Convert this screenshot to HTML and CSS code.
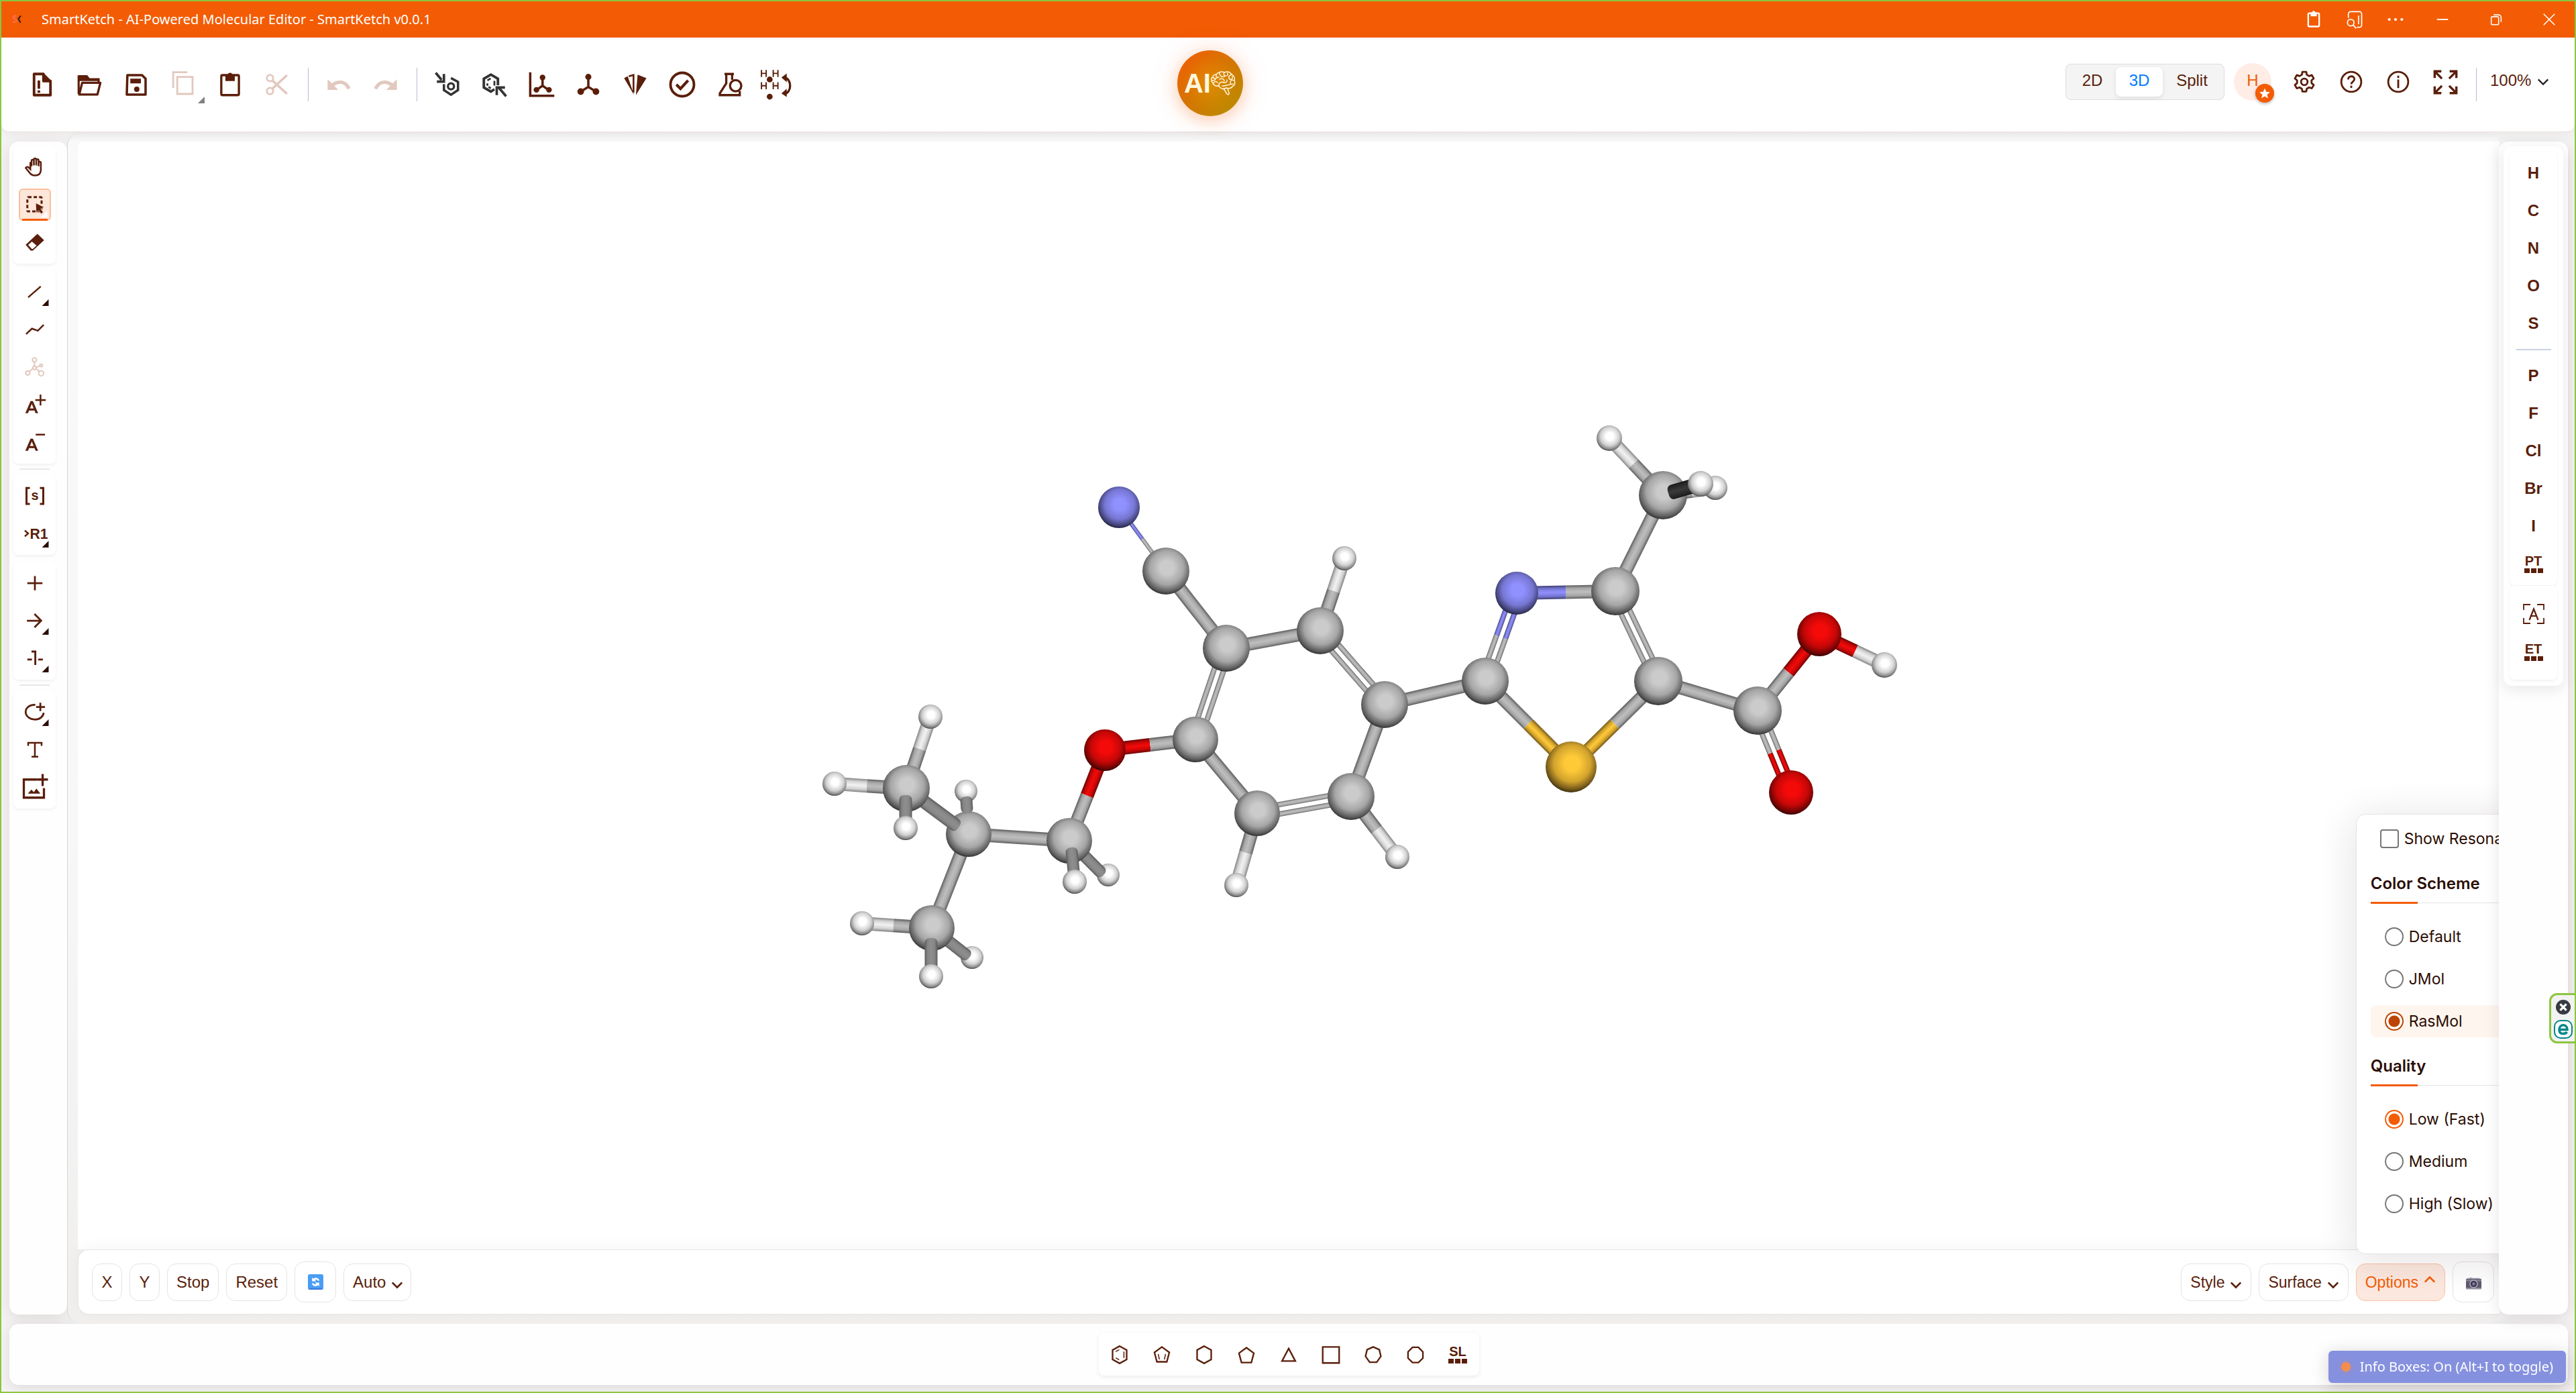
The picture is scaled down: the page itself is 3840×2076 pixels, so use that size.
FILE: index.html
```html
<!DOCTYPE html>
<html lang="en">
<head>
<meta charset="utf-8">
<title>SmartKetch - AI-Powered Molecular Editor</title>
<link rel="stylesheet" href="styles.css">
</head>
<body>
<div class="titlebar">
  <svg class="app-logo" viewBox="0 0 16 14"><path d="M7 2.500C5 .5 1.500 1.500 2 4s5 2 5 4.500S3.500 12 1 10.500" fill="none" stroke="#ff6b4a" stroke-width="2.500"/><path d="M14 1l-4 5 3.500 6" fill="none" stroke="#33221c" stroke-width="2.200"/></svg>
  <span class="titlebar-text">SmartKetch - AI-Powered Molecular Editor - SmartKetch v0.0.1</span>
  <div class="window-tools">
    <button class="win-btn narrow" aria-label="Clipboard"><svg viewBox="0 0 24 24"><rect x="5" y="4" width="14" height="17" rx="1.500" fill="none" stroke="currentColor" stroke-width="2"/><path d="M8 3h2a2 2 0 014 0h2v5H8z" fill="currentColor"/></svg></button>
    <button class="win-btn narrow" aria-label="Search page"><svg viewBox="0 0 24 24" fill="none" stroke="currentColor" stroke-width="1.500"><path d="M4 10V5a3 3 0 013-3h11a3 3 0 013 3v14a3 3 0 01-3 3h-3M17 7v11"/><circle cx="7" cy="16" r="4.200"/><path d="M10 19l4 4.500"/></svg></button>
    <button class="win-btn narrow" aria-label="More"><svg viewBox="0 0 24 24" fill="currentColor"><circle cx="4" cy="12" r="1.800"/><circle cx="12" cy="12" r="1.800"/><circle cx="20" cy="12" r="1.800"/></svg></button>
    <button class="win-btn" aria-label="Minimize"><svg viewBox="0 0 24 24" stroke="currentColor" stroke-width="2"><path d="M3 12h18"/></svg></button>
    <button class="win-btn" aria-label="Restore"><svg viewBox="0 0 24 24" fill="none" stroke="currentColor" stroke-width="1.700"><rect x="4" y="7.500" width="12" height="13" rx="2"/><path d="M8 4.500h8a4 4 0 014 4V16"/></svg></button>
    <button class="win-btn" aria-label="Close"><svg viewBox="0 0 24 24" stroke="currentColor" stroke-width="1.700"><path d="M3 3l18 18M21 3L3 21"/></svg></button>
  </div>
</div>

<header class="header">
  <div class="tools">
    <button class="tool" aria-label="New"><svg viewBox="0 0 24 24"><path d="M5 3h8v6h6v12H5z" fill="none" stroke="currentColor" stroke-width="2.200" stroke-linejoin="round"/><path d="M13 2l7 7h-7zM8 8.500h2.200v7H8zM8 17h2.200v2H8z" fill="currentColor"/></svg></button>
    <button class="tool" aria-label="Open"><svg viewBox="0 0 24 24"><path d="M3 20V5h7l2 2.500h8V10" fill="none" stroke="currentColor" stroke-width="1.800"/><path d="M3 4h7l2 3h8v2H3z" fill="currentColor"/><path d="M6 10.500h15.500L19 20.500H3.500z" fill="none" stroke="currentColor" stroke-width="1.900" stroke-linejoin="round"/></svg></button>
    <button class="tool" aria-label="Save"><svg viewBox="0 0 24 24"><path d="M4.500 4H17l3 3v13.500h-16z" fill="none" stroke="currentColor" stroke-width="2" stroke-linejoin="round"/><path d="M7 7h9v4H7z" fill="currentColor"/><circle cx="12.500" cy="16" r="2.300" fill="currentColor"/></svg></button>
    <button class="tool faded" aria-label="Copy" disabled><svg viewBox="0 0 24 24"><path d="M7 5.500h13V20H7z" fill="none" stroke="currentColor" stroke-width="1.600"/><path d="M3.500 15V1.500h12" fill="none" stroke="currentColor" stroke-width="1.600"/></svg><i class="corner"></i></button>
    <button class="tool" aria-label="Paste"><svg viewBox="0 0 24 24"><rect x="4.500" y="4" width="15" height="17" rx="1" fill="none" stroke="currentColor" stroke-width="1.900"/><path d="M8 4h2a2 2 0 014 0h2v5H8z" fill="currentColor"/></svg></button>
    <button class="tool faded" aria-label="Cut" disabled><svg viewBox="0 0 24 24" fill="none" stroke="currentColor"><circle cx="6" cy="6.500" r="2.700" stroke-width="1.600"/><circle cx="6" cy="17.500" r="2.700" stroke-width="1.600"/><path d="M8 8.500L20.500 20M8 15.500L20.500 4" stroke-width="2"/></svg></button>
    <span class="divider"></span>
    <button class="tool faded" aria-label="Undo" disabled><svg viewBox="0 0 24 24"><path d="M2.500 7.500v9h9L8.200 13.200c4.500-3.200 9-2 11 3l2.800-1C19.500 8.500 12 6.500 6.200 11z" fill="currentColor"/></svg></button>
    <button class="tool faded" aria-label="Redo" disabled><svg viewBox="0 0 24 24"><path d="M21.500 7.500v9h-9l3.300-3.300c-4.500-3.200-9-2-11 3l-2.800-1C4.500 8.500 12 6.500 17.800 11z" fill="currentColor"/></svg></button>
    <span class="divider"></span>
    <button class="tool slate" aria-label="Aromatize"><svg viewBox="0 0 24 24"><path d="M15 6.500l6 3.200v7l-6 4-6-4v-5" fill="none" stroke="currentColor" stroke-width="2"/><circle cx="15" cy="13.500" r="2.600" fill="none" stroke="currentColor" stroke-width="1.900"/><path d="M2 2l5 6M3 9.500h6V3" fill="none" stroke="currentColor" stroke-width="2.100"/></svg></button>
    <button class="tool slate" aria-label="Dearomatize"><svg viewBox="0 0 24 24"><path d="M15 12.500V7L9 3.500 3 7v7.500L9 18l3-2" fill="none" stroke="currentColor" stroke-width="2.200"/><path d="M6 8.500l2.800-1.700M6 13v-2M12 8.800v4M7 14l2 1.200" stroke="currentColor" stroke-width="1.600"/><path d="M22 22l-6-7M14 21v-6.500h7" fill="none" stroke="currentColor" stroke-width="2.100"/></svg></button>
    <button class="tool" aria-label="Layout"><svg viewBox="0 0 24 24"><path d="M2.500 1.500v20H23" fill="none" stroke="currentColor" stroke-width="2"/><path d="M13 6v7l-5 3.500M13 13l5 3.500" fill="none" stroke="currentColor" stroke-width="2"/><g fill="currentColor"><circle cx="13" cy="6" r="2.400"/><circle cx="7.800" cy="16.500" r="2.400"/><circle cx="18.500" cy="16.500" r="2.400"/></g></svg></button>
    <button class="tool" aria-label="Clean up"><svg viewBox="0 0 24 24"><path d="M12 6v8l-6.500 4M12 14l6.500 4" fill="none" stroke="currentColor" stroke-width="2"/><g fill="currentColor"><circle cx="12" cy="5.500" r="2.600"/><circle cx="5.500" cy="18" r="2.800"/><circle cx="18.500" cy="18" r="2.800"/></g></svg></button>
    <button class="tool" aria-label="Stereo"><svg viewBox="0 0 24 24"><path d="M14 3.500l7.500 3L12.500 21zM2.500 6.500l3-1.700L11 21z" fill="currentColor"/><path d="M6.500 5l4-1.200v15" fill="none" stroke="currentColor" stroke-width="1.500"/></svg></button>
    <button class="tool" aria-label="Check"><svg viewBox="0 0 24 24" fill="none" stroke="currentColor" stroke-width="2.200"><circle cx="12" cy="12" r="10"/><path d="M7 12l3.500 3.500L17 8.500" stroke-width="2.400"/></svg></button>
    <button class="tool" aria-label="Calculated values"><svg viewBox="0 0 24 24" fill="none" stroke="currentColor" stroke-width="1.900"><path d="M8 3h8M9.500 3v8L4 19.500V21h17v-3.500M14.500 3v5"/><circle cx="17.500" cy="13" r="4.800"/></svg></button>
    <button class="tool" aria-label="Explicit hydrogens"><svg viewBox="0 0 24 24"><path d="M-.5-.5v6M3.500-.5v6M-.5 2.500h4M9.500-.5v6M13.500-.5v6M9.500 2.500h4M-.5 10v6M3.500 10v6M-.5 13h4M9.500 10v6M13.500 10v6M9.500 13h4" stroke="currentColor" stroke-width="1.100"/><circle cx="6.500" cy="7.700" r="2.500" fill="currentColor"/><circle cx="6.500" cy="22.300" r="2.500" fill="currentColor"/><path d="M19 6c6.500 1 6.500 13 0 14" fill="none" stroke="currentColor" stroke-width="1.900"/><path d="M16.500 6L21 2.500v7.500zM16.500 19.500l4.500-4v7z" fill="currentColor"/></svg></button>
  </div>

  <button class="ai-button" aria-label="AI assistant"><span>AI</span><svg viewBox="0 0 38 36" fill="none" stroke="currentColor" stroke-width="1.500" stroke-linecap="round"><path d="M8 5c3-4 9-5 12-3 5-2 9 0 11 3 4 2 5 6 4 9 2 4 0 8-3 9-2 3-6 3-9 2-5 3-9 1-11-3-4 1-8-1-9-4-3-3-3-8 0-9 0-3 3-4 5-4z"/><path d="M8 5c-1 4 2 5 4 4M13 3c0 5 5 7 9 4M20 2c-2 3 0 5 2 5M25 3c1 2 0 3-1 4M31 5c-3 1-6 4-3 7 3 1 5-1 4-4M3 9c2 3 6 2 7 0M2 14c3 0 5-1 5-3M4 18c1-3 4-3 6-1M13 12c4-2 7 0 7 3M12 22c-1-4 3-7 7-5 3 1 6-1 5-4M35 14c-3-2-6 0-6 3s3 3 4 2M17 22c3 1 5-1 7-1s4 0 5-2M19 26l5 8c2 2 4 0 3-2l-2-6"/></svg></button>

  <div class="header-right">
    <div class="segmented">
      <button>2D</button><button class="active">3D</button><button>Split</button>
    </div>
    <button class="avatar" aria-label="Account H">H<span class="badge"><svg viewBox="0 0 24 24"><path d="M12 3l2.700 6.300 6.800.6-5.200 4.500 1.600 6.700L12 17.500l-5.900 3.600 1.600-6.700-5.200-4.500 6.800-.6z" fill="#fff"/></svg></span></button>
    <button class="round-tool" aria-label="Settings"><svg viewBox="0 0 24 24" fill="none" stroke="currentColor" stroke-width="2" stroke-linejoin="round"><path d="M10 1.500h4l.6 3 2.400 1.400 2.900-1 2 3.500-2.300 2v2.900l2.300 2-2 3.500-2.900-1-2.400 1.400-.6 3h-4l-.6-3L7 17.800l-2.900 1-2-3.500 2.300-2v-2.900l-2.300-2 2-3.500 2.900 1 2.400-1.400z"/><circle cx="12" cy="12" r="3.400"/></svg></button>
    <button class="round-tool" aria-label="Help"><svg viewBox="0 0 24 24" fill="none" stroke="currentColor" stroke-width="2"><circle cx="12" cy="12" r="10.500"/><path d="M8.800 9.500c0-4.500 6.500-4.300 6.500-.3 0 2.500-3.300 2.600-3.300 5.300"/><path d="M12 16v2.400"/></svg></button>
    <button class="round-tool" aria-label="About"><svg viewBox="0 0 24 24" fill="none" stroke="currentColor" stroke-width="2"><circle cx="12" cy="12" r="10.500"/><path d="M12 9.500v9M12 5.500V8"/></svg></button>
    <button class="round-tool" aria-label="Full screen"><svg class="wide" viewBox="0 0 24 24" fill="none" stroke="currentColor" stroke-width="2.200"><path d="M1.500 8V1.500H8M16 1.500h6.500V8M22.500 16v6.500H16M8 22.500H1.500V16M2 2l6.500 6.500M22 2l-6.500 6.500M22 22l-6.500-6.500M2 22l6.500-6.500"/></svg></button>
    <span class="divider"></span>
    <label class="zoom"><select aria-label="Zoom"><option>100%</option></select><svg class="chevron" viewBox="0 0 20 12"><path d="M2 2l8 8 8-8"/></svg></label>
  </div>
</header>

<main class="workspace">
  <nav class="left-bar" aria-label="Drawing tools">
    <div class="group">
      <button class="item" aria-label="Hand"><svg viewBox="0 0 24 24"><path d="M8 11V4.500a1.400 1.400 0 012.800 0V10 3a1.400 1.400 0 012.800 0v7-6a1.400 1.400 0 012.800 0v7-4a1.300 1.300 0 012.700 0v8c0 5-3 7-7 7-3 0-5-1-7-4l-4-5c1-1.500 3-1.500 4 0l1.500 1.500V6" fill="none" stroke="currentColor" stroke-width="2"/></svg></button>
      <button class="item selected" aria-label="Select"><svg viewBox="0 0 24 24"><rect x="3" y="3" width="17" height="17" rx="1" fill="none" stroke="currentColor" stroke-width="2.400" stroke-dasharray="4 2.500"/><path d="M13 10l10 5-4 2 3 4-2.500 2-3-4-3 3z" fill="currentColor" stroke="#fde6da" stroke-width=".6"/></svg><i class="corner pale"></i></button>
      <button class="item" aria-label="Erase"><svg viewBox="0 0 24 24"><path d="M1 15L15 2l8 7.500L9.500 22H7z" fill="currentColor"/><path d="M4 15.200l4.500-4 5.500 4.800L9.500 20h-1.200z" fill="#fff"/></svg></button>
    </div>
    <div class="group">
      <button class="item" aria-label="Bond"><svg viewBox="0 0 24 24"><path d="M4 18.500l15-13" stroke="currentColor" stroke-width="2"/></svg><i class="corner"></i></button>
      <button class="item" aria-label="Chain"><svg viewBox="0 0 24 24"><path d="M1.500 17.500l7-6.500 7 2.500 7-7" fill="none" stroke="currentColor" stroke-width="2"/></svg></button>
      <button class="item faded" aria-label="Stereochemistry" disabled><svg viewBox="0 0 24 24" fill="none" stroke="currentColor" stroke-width="1.600"><circle cx="11.500" cy="3.500" r="2.500"/><circle cx="11.500" cy="13" r="2"/><circle cx="3.500" cy="19" r="2.500"/><circle cx="19.500" cy="19.500" r="3"/><circle cx="19.500" cy="10" r="1.500"/><path d="M11.500 6v5M9.500 14l-4 3M13.500 14l4 3.500M13.500 12.500l4.500-2"/></svg></button>
      <button class="item" aria-label="Charge plus"><svg viewBox="0 0 24 24"><path d="M1 22L7 8h2.500l6 14H13l-1.300-3.200H4.900L3.600 22zM5.700 16.800h5.200L8.300 10.500z" fill="currentColor" stroke="currentColor" stroke-width=".5"/><path d="M12.500 6.500H25M18.700 0v13" stroke="currentColor" stroke-width="2"/></svg></button>
      <button class="item" aria-label="Charge minus"><svg viewBox="0 0 24 24"><path d="M1 22L7 8h2.500l6 14H13l-1.300-3.200H4.900L3.600 22zM5.700 16.800h5.200L8.300 10.500z" fill="currentColor" stroke="currentColor" stroke-width=".5"/><path d="M13 3h11" stroke="currentColor" stroke-width="2"/></svg></button>
    </div>
    <hr>
    <div class="group">
      <button class="item" aria-label="S-Group"><svg viewBox="0 0 24 24"><path d="M6 2.500H2v19h4M18 2.500h4v19h-4" fill="none" stroke="currentColor" stroke-width="2.400"/><text x="12" y="17" text-anchor="middle" font-size="16" font-weight="700" fill="currentColor">s</text></svg></button>
      <button class="item" aria-label="R-Group"><svg viewBox="0 0 24 24"><path d="M0 8.500l4 3.500-4 3.500" fill="none" stroke="currentColor" stroke-width="2"/><text x="6" y="18" font-size="17" font-weight="700" fill="currentColor">R1</text></svg><i class="corner"></i></button>
    </div>
    <div class="group">
      <button class="item" aria-label="Reaction plus"><svg viewBox="0 0 24 24"><path d="M3 12h18M12 3.500v17" stroke="currentColor" stroke-width="2.200"/></svg></button>
      <button class="item" aria-label="Arrow"><svg viewBox="0 0 24 24"><path d="M2.500 12h17M11.500 4l8 8-8 8" fill="none" stroke="currentColor" stroke-width="2.200"/></svg><i class="corner"></i></button>
      <button class="item" aria-label="Reaction mapping"><svg viewBox="0 0 24 24"><path d="M3 13.500h5.500M16 13.500h5.500M8 4h4.500v16" fill="none" stroke="currentColor" stroke-width="2.300"/></svg><i class="corner"></i></button>
    </div>
    <hr>
    <div class="group">
      <button class="item" aria-label="Shape"><svg viewBox="0 0 24 24"><path d="M12.500 3.500C6 3 1 7 1 12s5 9 11 9S22 17.500 22.500 13" fill="none" stroke="currentColor" stroke-width="2.200"/><path d="M13.500 6H24M18.500 1v10" stroke="currentColor" stroke-width="2.200"/></svg><i class="corner"></i></button>
      <button class="item" aria-label="Text"><svg viewBox="0 0 24 24"><path d="M4 7.500V4h16v3.500M12 4v16.500M8 20.500h8" fill="none" stroke="currentColor" stroke-width="2"/></svg></button>
      <button class="item" aria-label="Image"><svg class="large" viewBox="0 0 24 24"><path d="M14.500 4.500H1V22.500h20V13" fill="none" stroke="currentColor" stroke-width="2.200"/><path d="M5 18.500l3.500-4 2.500 2.500 2.500-3.500 4 5z" fill="currentColor"/><path d="M14.500 4.500H25M19.700-1v12" stroke="currentColor" stroke-width="2.200"/></svg></button>
    </div>
  </nav>

  <section class="stage">
    <svg class="molecule" id="molecule" viewBox="116 211 3610 1651" role="img" aria-label="Molecule"></svg>
    <div class="stage-bar">
      <button class="pill">X</button>
      <button class="pill">Y</button>
      <button class="pill">Stop</button>
      <button class="pill">Reset</button>
      <button class="pill emoji" aria-label="Refresh"><svg viewBox="0 0 24 24"><rect width="24" height="24" rx="3" fill="#4a9df5"/><path d="M2 23h20" stroke="#3b76dc" stroke-width="2"/><path d="M6.500 11V5l2 2c4-3 8-1.500 9.500 3h-3c-1-2-2.500-2-4-1l2 2zM17.500 13v6l-2-2c-4 3-8 1.500-9.500-3h3c1 2 2.500 2 4 1l-2-2z" fill="#fff"/></svg></button>
      <label class="pill drop"><select aria-label="Rotation"><option>Auto</option></select><svg class="chevron low" viewBox="0 0 20 12"><path d="M2 2l8 8 8-8"/></svg></label>
      <span class="spacer"></span>
      <button class="pill menu">Style<svg class="chevron low" viewBox="0 0 20 12"><path d="M2 2l8 8 8-8"/></svg></button>
      <button class="pill menu">Surface<svg class="chevron low" viewBox="0 0 20 12"><path d="M2 2l8 8 8-8"/></svg></button>
      <div class="menu-anchor">
        <button class="pill menu open" aria-expanded="true">Options<svg class="chevron high" viewBox="0 0 20 12"><path d="M2 10l8-8 8 8"/></svg></button>
        <div class="options-menu">
          <label class="check"><input type="checkbox">Show Resonance</label>
          <h2>Color Scheme</h2>
          <div class="choices">
            <label class="choice"><input type="radio" name="scheme">Default</label>
            <label class="choice"><input type="radio" name="scheme">JMol</label>
            <label class="choice hover"><input type="radio" name="scheme" checked>RasMol</label>
          </div>
          <h2>Quality</h2>
          <div class="choices">
            <label class="choice"><input type="radio" name="quality" checked>Low (Fast)</label>
            <label class="choice"><input type="radio" name="quality">Medium</label>
            <label class="choice"><input type="radio" name="quality">High (Slow)</label>
          </div>
        </div>
      </div>
      <button class="pill emoji" aria-label="Snapshot"><svg class="camera" viewBox="0 0 24 24"><path d="M2 4h4V3h3v1h12v1H2z" fill="#9a94a6"/><rect y="5" width="24" height="16" rx="1" fill="#5f5a6c"/><path d="M0 6h24v3H0z" fill="#86809a"/><path d="M0 19h24v2H0z" fill="#9a94a6"/><circle cx="12" cy="13" r="6.500" fill="#b5b0c2"/><circle cx="12" cy="13" r="5" fill="#3b3650"/><circle cx="12" cy="13" r="2.500" fill="#7f78a0"/></svg></button>
    </div>
  </section>

  <aside class="right-bar" aria-label="Atoms">
    <div class="right-card">
      <div class="group">
        <button class="item">H</button><button class="item">C</button><button class="item">N</button><button class="item">O</button><button class="item">S</button>
        <hr>
        <button class="item">P</button><button class="item">F</button><button class="item">Cl</button><button class="item">Br</button><button class="item">I</button>
        <button class="item table"><span>PT</span><i class="dots"></i></button>
      </div>
      <div class="group tall">
        <button class="item" aria-label="Any atom"><svg viewBox="0 0 32 32" fill="none" stroke="currentColor"><path d="M11 2H1v8M21 2h10v8M31 22v8H21M11 30H1v-8" stroke-width="1.800"/><path d="M9.500 25L16 8.500 22.500 25M12 19h8" stroke-width="2.200"/></svg></button>
        <button class="item table"><span>ET</span><i class="dots"></i></button>
      </div>
    </div>
  </aside>
</main>

<footer class="bottom-bar">
  <div class="templates">
    <button aria-label="Benzene"><svg viewBox="0 0 24 24" fill="none" stroke="currentColor" stroke-width="2"><path d="M12 1l9 5v12l-9 5-9-5V6z"/><path d="M17.500 8v8M11.500 5.500L7 8M7 16l4.500 2.500" stroke-width="1.300"/></svg></button>
    <button aria-label="Cyclopentadiene"><svg viewBox="0 0 24 24" fill="none" stroke="currentColor" stroke-width="2"><path d="M12 2l9.500 7-3.200 12H5.700L2.500 9z"/><path d="M16.700 11l-1.500 7M7.300 11l1.500 7" stroke-width="1.300"/></svg></button>
    <button aria-label="Cyclohexane"><svg viewBox="0 0 24 24" fill="none" stroke="currentColor" stroke-width="2"><path d="M12 1l9 5v12l-9 5-9-5V6z"/></svg></button>
    <button aria-label="Cyclopentane"><svg viewBox="0 0 24 24" fill="none" stroke="currentColor" stroke-width="2"><path d="M12 3l9.500 7-3.200 12H5.700L2.500 10z"/></svg></button>
    <button aria-label="Cyclopropane"><svg viewBox="0 0 24 24" fill="none" stroke="currentColor" stroke-width="2"><path d="M12 4l8.500 16h-17z"/></svg></button>
    <button aria-label="Cyclobutane"><svg viewBox="0 0 24 24" fill="none" stroke="currentColor" stroke-width="2"><path d="M1.500 2h21v20.500h-21z"/></svg></button>
    <button aria-label="Cycloheptane"><svg viewBox="0 0 24 24" fill="none" stroke="currentColor" stroke-width="2"><path d="M12 2l7.800 3.500 2 8.500-5.300 7.500h-9L2.200 14l2-8.500z"/></svg></button>
    <button aria-label="Cyclooctane"><svg viewBox="0 0 24 24" fill="none" stroke="currentColor" stroke-width="2"><path d="M8.200 2.500h7.600l5.700 5.800v8l-5.700 5.700H8.200l-5.700-5.700v-8z"/></svg></button>
    <button class="table"><span>SL</span><i class="dots"></i></button>
  </div>
</footer>

<div class="toast"><i></i>Info Boxes: On (Alt+I to toggle)</div>
<div class="side-widget">
  <svg viewBox="0 0 24 24"><circle cx="12" cy="12" r="12" fill="#363b42"/><path d="M7 7l10 10M17 7L7 17" stroke="#fff" stroke-width="3.500"/></svg>
  <svg class="logo" viewBox="0 0 28 28"><rect x="1" y="1" width="26" height="26" rx="9" fill="#fff" stroke="#00868c" stroke-width="2"/><path d="M8 14.500h12c0-9-12-9-12 0s10 6 11.500 3.500" fill="none" stroke="#00868c" stroke-width="3.500"/></svg>
</div>
<script src="molecule.js"></script>
</body>
</html>
```
FILE: styles.css
```css
* { box-sizing: border-box; }

body {
  margin: 0;
  min-height: 100vh;
  display: flex;
  flex-direction: column;
  border: 2px solid #8cc63f;
  background: #f4f3f3;
  color: #5a1e0a;
  font: 24px/32px "Liberation Sans", Arial, sans-serif;
}

button, select {
  margin: 0;
  padding: 0;
  border: 0;
  background: none;
  color: inherit;
  font: inherit;
}

select { appearance: none; }
svg { display: block; overflow: visible; }

/* window title */
.titlebar {
  display: flex;
  align-items: center;
  height: 54px;
  padding-left: 16px;
  background: #f35c04;
  color: #fff;
  font: 20px/28px "Noto Sans", "Open Sans", sans-serif;
}
.app-logo { width: 15px; height: 14px; }
.titlebar-text { margin-left: 29px; }
.window-tools { display: flex; margin-left: auto; }
.win-btn { display: flex; align-items: center; justify-content: center; width: 80px; height: 54px; }
.win-btn.narrow { width: 61px; }
.win-btn:last-child { width: 77px; }
.win-btn svg { width: 22px; height: 22px; }
.win-btn.narrow svg { width: 28px; height: 28px; }

/* header */
.header {
  position: relative;
  z-index: 3;
  display: flex;
  align-items: center;
  justify-content: space-between;
  height: 141px;
  padding: 0 38px 0 26px;
  background: #fff;
  border-bottom: 1px solid #e8e0dc;
  border-radius: 0 0 12px 12px;
  box-shadow: 0 2px 16px rgba(60, 20, 10, .06);
}
.tools { display: flex; align-items: center; }
.tool { position: relative; display: flex; align-items: center; justify-content: center; width: 70px; height: 62px; }
.tool svg { width: 42px; height: 42px; }
.faded { color: #e2c8be; }
.slate { color: #333; }
.divider { width: 1px; height: 50px; margin: 0 10px 0 11px; background: #b8bdd2; }
.corner {
  position: absolute;
  right: 3px;
  bottom: 3px;
  width: 10px;
  height: 10px;
  background: #2b0d04;
  clip-path: polygon(100% 0, 100% 100%, 0 100%);
}
.tool .corner { background: #808080; }
.corner.pale { background: #fff; }

.ai-button {
  position: absolute;
  left: 47%;
  top: 19px;
  display: flex;
  align-items: center;
  justify-content: center;
  width: 98px;
  height: 98px;
  margin-left: -50px;
  border-radius: 50%;
  background: radial-gradient(circle at 50% 50%, rgba(255, 200, 0, .25), transparent 60%), linear-gradient(135deg, #f35c04, #b59000);
  box-shadow: 0 6px 24px rgba(243, 92, 4, .28), 0 0 48px rgba(243, 92, 4, .1);
  color: #fff7dd;
  font-weight: 700;
  font-size: 40px;
}
.ai-button svg { width: 38px; height: 36px; }

.header-right { display: flex; align-items: center; padding-bottom: 8px; }
.segmented { display: flex; height: 54px; padding: 4px; border: 1px solid #ddd; border-radius: 8px; background: #f4f4f4; }
.segmented button { width: 70px; padding-bottom: 4px; border-radius: 8px; }
.segmented button:last-child { width: 87px; }
.segmented .active { background: #fff; color: #007aff; box-shadow: 0 2px 6px rgba(0, 0, 0, .1); }
.avatar { position: relative; width: 56px; height: 56px; margin: 0 14px; padding-bottom: 4px; border-radius: 50%; background: #feece5; color: #f35c04; }
.badge { position: absolute; right: -4px; bottom: -3px; display: flex; align-items: center; justify-content: center; width: 28px; height: 28px; border-radius: 50%; background: #f35c04; box-shadow: 0 2px 4px rgba(0, 0, 0, .25); }
.badge svg { width: 20px; height: 20px; }
.round-tool { display: flex; align-items: center; justify-content: center; width: 70px; height: 56px; }
.round-tool svg { width: 34px; height: 34px; }
.round-tool .wide { width: 37px; height: 37px; }
.header-right .divider { margin: 8px 20px 0 11px; }
.zoom { display: flex; align-items: center; gap: 8px; }
.zoom select { padding-bottom: 4px; }
.chevron { width: 18px; height: 12px; fill: none; stroke: currentColor; stroke-width: 2.500; }
.zoom .chevron { color: #222; }

/* workspace */
.workspace { display: flex; flex: 1; padding: 0 10px 0 12px; }
.left-bar {
  width: 86px;
  margin: 14px 0;
  padding: 6px 17px 6px 6px;
  background: #fefefe;
  border-radius: 14px;
  box-shadow: 0 6px 22px rgba(60, 30, 30, .11);
}
.group { display: flex; flex-direction: column; align-items: center; gap: 8px; padding: 8px 0; background: #fff; border-radius: 8px; box-shadow: 0 2px 4px rgba(0, 0, 0, .06); }
.group + .group { margin-top: 10px; }
.left-bar hr { width: 45px; height: 2px; margin: 7px 9px; border: 0; background: #ebe6e6; }
.item { position: relative; display: flex; align-items: center; justify-content: center; width: 48px; height: 48px; font-weight: 700; }
.item svg { width: 30px; height: 30px; }
.item svg.large { width: 36px; height: 36px; }
.item.selected { background: #fde6da; border: 2px solid #fbc09c; border-radius: 6px; }
.item.selected::after { content: ""; position: absolute; left: 3px; right: 3px; bottom: -2px; height: 3px; background: #f35c04; }

.stage {
  position: relative;
  display: flex;
  flex: 1;
  flex-direction: column;
  padding: 14px 0 14px 15px;
  border-left: 1px solid #d9d5d4;
  border-radius: 20px;
  background: linear-gradient(#f0f0f0, #f9f9f9 14px, #f7f7f7 60%, #f0efee);
}
.molecule { flex: 1; width: 100%; min-height: 0; background: #fff; border-radius: 8px 0 0 0; }
.stage-bar { display: flex; align-items: center; gap: 11px; height: 97px; padding: 0 8px 0 20px; border: 1px solid #e8e6e5; border-right: 0; border-radius: 16px 0 0 16px; background: #fff; box-shadow: 0 -4px 20px rgba(60, 30, 30, .04); }
.pill { display: flex; align-items: center; justify-content: center; gap: 8px; min-width: 45px; height: 56px; padding: 0 13px; border: 1px solid #e6e4e3; border-radius: 14px; background: #fff; }
.pill.emoji { width: 62px; height: 61px; padding: 0; }
.pill.emoji svg { width: 23px; height: 23px; }
.pill .chevron { flex: none; width: 18px; }
.pill.drop { padding: 0 11px 0 13px; gap: 7px; }
.pill.menu { font-size: 23px; }
.chevron.low { margin-top: 8px; stroke-width: 3; }
.chevron.high { margin-bottom: 8px; stroke-width: 3; }
.pill.open { background: #fce8df; border-color: #f9c3a8; color: #f35c04; }
.pill .camera { margin-top: 4px; }
.spacer { flex: 1; }

.menu-anchor { position: relative; }
.options-menu {
  position: absolute;
  left: 0;
  bottom: calc(100% + 14px);
  width: 290px;
  padding: 12px 0 50px 21px;
  border: 1px solid #e6e4e3;
  border-radius: 14px;
  background: #fff;
  box-shadow: 0 8px 60px rgba(60, 30, 30, .14);
  color: #2b0d04;
  font-family: Inter, "Noto Sans", sans-serif;
  font-size: 23px;
}
.check, .choice { display: flex; align-items: center; gap: 8px; height: 48px; padding-left: 21px; border-radius: 8px; white-space: nowrap; }
.check { padding-left: 14px; }
.choices { display: flex; flex-direction: column; gap: 15px; }
.choice.hover { background: #fff5ef; }
.options-menu input { flex: none; width: 28px; height: 28px; margin: 0; accent-color: #f35c04; }
.options-menu input[type="radio"] { appearance: none; border: 2px solid #767676; border-radius: 50%; background: #fff; }
.options-menu input[type="radio"]:checked { border-color: #f35c04; background: radial-gradient(circle, #f35c04 0 8px, #fff 9px); }
.options-menu .hover input[type="radio"]:checked { border-color: #bd4503; background: radial-gradient(circle, #bd4503 0 8px, #fff 9px); }
.options-menu input[type="checkbox"] { appearance: none; border: 2px solid #767676; border-radius: 4px; background: #fff; }
.options-menu h2 { position: relative; margin: 27px 0 26px; padding-bottom: 12px; border-bottom: 1px solid #e6e4e3; font-size: 24px; font-weight: 600; line-height: 32px; }
.options-menu h2::after { content: ""; position: absolute; left: 0; bottom: -2px; width: 70px; height: 3px; background: #f35c04; }

.right-bar {
  position: relative;
  z-index: 2;
  width: 103px;
  margin: 14px 0 14px -1px;
  padding: 7px;
  background: #fefefe;
  border-radius: 14px;
  box-shadow: 0 6px 22px rgba(60, 30, 30, .12);
}
.right-card { padding: 8px 9px 9px; background: #fff; border-radius: 12px; box-shadow: 0 6px 20px rgba(60, 30, 30, .1); }
.right-bar .group + .group { margin-top: 1px; }
.right-bar hr { width: 52px; height: 2px; margin: 6px 0; border: 0; background: #c9d3e0; }
.group.tall { padding: 18px 0; }
.right-bar .item svg { width: 32px; height: 32px; }
.right-bar .item.table, .templates .table { flex-direction: column; gap: 2px; font-size: 20px; font-weight: 700; line-height: 18px; }
.dots { width: 28px; height: 7px; background: repeating-linear-gradient(90deg, currentColor 0 8px, transparent 8px 10px); }

/* templates */
.bottom-bar { display: flex; justify-content: center; margin: 0 10px 10px 12px; padding: 14px 0; border-radius: 14px; background: #fefefe; box-shadow: 0 4px 18px rgba(60, 30, 30, .12); }
.templates { display: flex; border-radius: 8px; background: #fff; box-shadow: 0 2px 6px rgba(0, 0, 0, .08); }
.templates button { display: flex; align-items: center; justify-content: center; width: 63px; height: 63px; }
.templates svg { width: 28px; height: 28px; }

.toast {
  position: fixed;
  z-index: 5;
  right: 15px;
  bottom: 15px;
  display: flex;
  align-items: center;
  gap: 14px;
  height: 48px;
  padding: 0 19px;
  border-radius: 6px;
  background: #8591df;
  box-shadow: 0 4px 24px rgba(60, 30, 30, .2);
  color: #fff;
  font: 20px/28px "Noto Sans", "Open Sans", sans-serif;
}
.toast i { width: 14px; height: 14px; border-radius: 50%; background: #f68d4f; box-shadow: 0 0 8px #b98a9a; }
.side-widget { position: fixed; z-index: 5; right: 0; top: 1480px; display: flex; flex-direction: column; align-items: center; gap: 8px; width: 40px; height: 75px; padding: 7px 2px 0; border: 3px solid #8cc63f; border-right-width: 2px; border-radius: 12px 0 0 12px; background: #f3f2f2; }
.side-widget svg { flex: none; width: 22px; height: 22px; }
.side-widget .logo { width: 28px; height: 28px; }
```
FILE: molecule.js
```js
// Ball-and-stick model: atoms are [element, x, y, radius].
const atoms = {
  n1: ['N', 1668, 756, 31], c1: ['C', 1738, 851, 35], c2: ['C', 1828, 966, 35],
  c3: ['C', 1968, 940, 35], h3: ['H', 2004, 832, 18], c4: ['C', 2064, 1050, 35],
  c5: ['C', 2014, 1187, 35], h5: ['H', 2083, 1277, 18], c6: ['C', 1874, 1212, 34],
  h6: ['H', 1843, 1319, 18], c7: ['C', 1782, 1102, 34], o1: ['O', 1647, 1118, 31],
  c8: ['C', 1594, 1253, 34], h8a: ['H', 1602, 1314, 18], h8b: ['H', 1652, 1304, 17],
  c9: ['C', 1444, 1243, 34], h9: ['H', 1440, 1179, 17],
  c10: ['C', 1351, 1175, 35], h10a: ['H', 1387, 1068, 18], h10b: ['H', 1244, 1168, 18], h10c: ['H', 1350, 1234, 18],
  c11: ['C', 1389, 1383, 34], h11a: ['H', 1285, 1376, 18], h11b: ['H', 1388, 1455, 18], h11c: ['H', 1449, 1427, 17],
  c12: ['C', 2214, 1015, 35], n2: ['N', 2261, 884, 32], c13: ['C', 2408, 881, 36],
  c14: ['C', 2479, 738, 36], h14a: ['H', 2399, 653, 19], h14b: ['H', 2557, 727, 18], h14c: ['H', 2535, 721, 19],
  c15: ['C', 2472, 1015, 36], s1: ['S', 2342, 1143, 38], c16: ['C', 2620, 1059, 36],
  o2: ['O', 2712, 945, 33], h2: ['H', 2809, 991, 19], o3: ['O', 2670, 1181, 33]
};
// [highlight, middle, rim, extreme edge]
const colors = {
  C: ['#cbcbcb', '#a6a6a6', '#5c5c5c', '#2c2c2c'], H: ['#ffffff', '#d2d2d2', '#848484', '#3c3c3c'],
  N: ['#9090ff', '#7676d2', '#414175', '#1f1f3a'], O: ['#f50a0a', '#c60707', '#6c0404', '#2e0101'],
  S: ['#ffca38', '#d2a32d', '#735819', '#35280b'], D: ['#8e8e8e', '#858585', '#5c5c5c', '#3c3c3c'],
  K: ['#3a3a3a', '#2a2a2a', '#181818', '#101010']
};
const ns = 'http://www.w3.org/2000/svg';
const svg = document.getElementById('molecule');

function add(parent, tag, attrs) {
  const el = document.createElementNS(ns, tag);
  for (const k in attrs) el.setAttribute(k, attrs[k]);
  parent.appendChild(el);
  return el;
}

const defs = add(svg, 'defs', {});
for (const key in colors) {
  const [light, mid, rim, edge] = colors[key];
  const ball = add(defs, 'radialGradient', { id: 'ball' + key, cx: .52, cy: .43, r: .58 });
  [[0, light], [.25, light], [.62, mid], [.88, rim], [1, edge]].forEach(([o, c]) => add(ball, 'stop', { offset: o, 'stop-color': c }));
  const rod = add(defs, 'linearGradient', { id: 'rod' + key, x1: 0, y1: 0, x2: 0, y2: 1 });
  const core = key === 'H' ? '#f2f2f2' : key === 'C' ? '#bebebe' : light;
  [[0, rim], [.22, mid], [.5, core], [.78, mid], [1, rim]].forEach(([o, c]) => add(rod, 'stop', { offset: o, 'stop-color': c }));
}

function rod(x1, y1, x2, y2, width, from, to, shift, split, round) {
  const length = Math.hypot(x2 - x1, y2 - y1);
  const angle = Math.atan2(y2 - y1, x2 - x1) * 180 / Math.PI;
  const g = add(svg, 'g', { transform: `translate(${x1} ${y1}) rotate(${angle})` });
  const y = shift - width / 2;
  if (from === to) {
    add(g, 'rect', { x: 0, y, width: length, height: width, rx: round ? 7 : 0, fill: `url(#rod${from})` });
    return;
  }
  add(g, 'rect', { x: length * split, y, width: length * (1 - split), height: width, fill: `url(#rod${to})` });
  add(g, 'rect', { x: 0, y, width: length * split, height: width, fill: `url(#rod${from})` });
}

function bond(a, b, order = 1, width = 20) {
  const [ea, x1, y1] = atoms[a], [eb, x2, y2] = atoms[b];
  const split = eb === 'H' ? .55 : .5;
  if (order === 1) rod(x1, y1, x2, y2, width, ea, eb, 0, split);
  else [-7, 7].forEach(s => rod(x1, y1, x2, y2, 8, ea, eb, s, split));
}

function ball(name) {
  const [e, cx, cy, r] = atoms[name];
  add(svg, 'circle', { cx, cy, r, fill: `url(#ball${e})` });
}

bond('n1', 'c1', 1, 6);
bond('c1', 'c2'); bond('c2', 'c3'); bond('c3', 'h3'); bond('c3', 'c4', 2);
bond('c4', 'c5'); bond('c5', 'h5'); bond('c5', 'c6', 2); bond('c6', 'h6');
bond('c6', 'c7'); bond('c7', 'c2', 2); bond('c7', 'o1'); bond('o1', 'c8');
bond('c8', 'c9'); bond('c9', 'c11'); bond('c10', 'h10a'); bond('c10', 'h10b'); bond('c11', 'h11a');
bond('c4', 'c12'); bond('c12', 'n2', 2); bond('n2', 'c13'); bond('c13', 'c14');
bond('c14', 'h14a'); bond('c14', 'h14b'); bond('c13', 'c15', 2); bond('c12', 's1'); bond('c15', 's1');
bond('c15', 'c16'); bond('c16', 'o2'); bond('o2', 'h2'); bond('c16', 'o3', 2);

['h9', 'h8b', 'h11c', 'c9', 'h14b'].forEach(ball);
rod(1440, 1187, 1442, 1212, 18, 'D', 'D', 0, .5, true);
rod(1645, 1304, 1594, 1253, 18, 'D', 'D', 0, .5, true);
rod(1445, 1427, 1389, 1383, 18, 'D', 'D', 0, .5, true);
rod(1429, 1233, 1351, 1175, 20, 'D', 'D', 0, .5, true);

['n1', 'c1', 'c2', 'c3', 'h3', 'c4', 'c5', 'h5', 'c6', 'h6', 'c7', 'o1', 'c8', 'c10', 'h10a', 'h10b',
  'c11', 'h11a', 'c12', 'n2', 'c13', 'c14', 'h14a', 'c15', 's1', 'c16', 'o2', 'h2', 'o3'].forEach(ball);

rod(1597, 1263, 1602, 1314, 18, 'D', 'D', 0, .5, true);
rod(1350, 1185, 1350, 1234, 19, 'D', 'D', 0, .5, true);
rod(1388, 1398, 1388, 1455, 19, 'D', 'D', 0, .5, true);
rod(2487, 735, 2535, 721, 22, 'K', 'K', 0, .6, true);
['h8a', 'h10c', 'h11b', 'h14c'].forEach(ball);
```
